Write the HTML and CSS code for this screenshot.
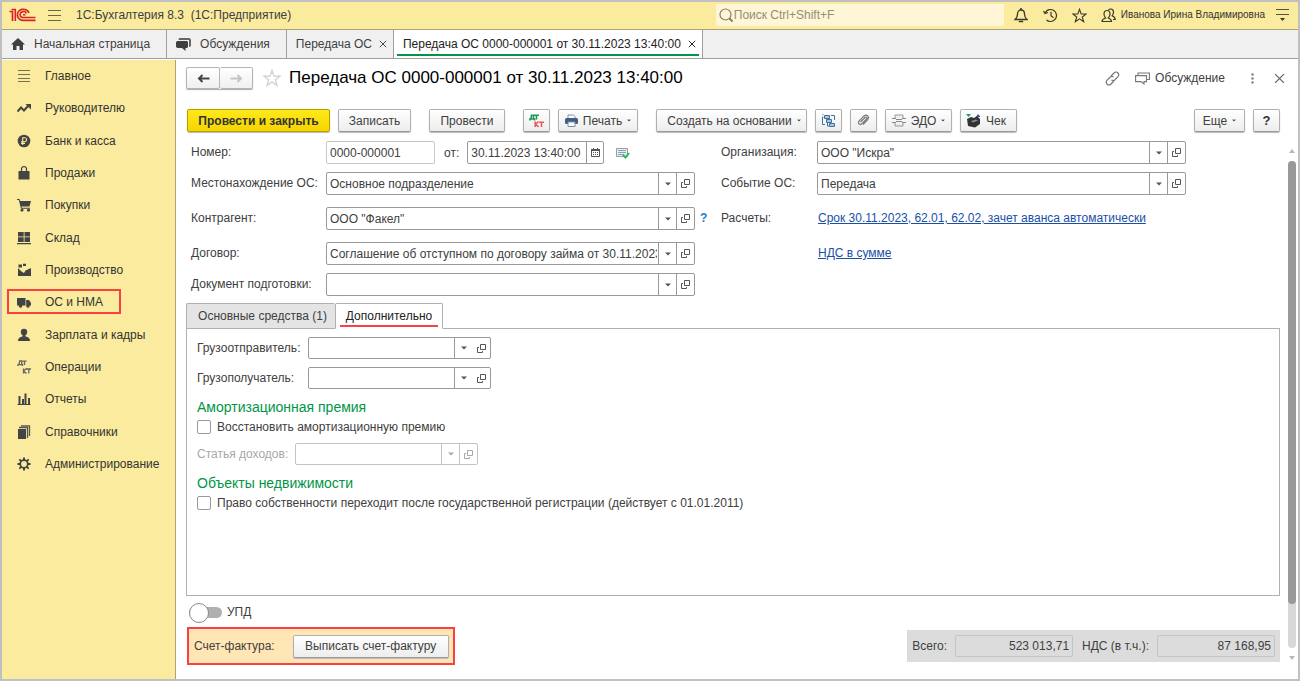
FILE: index.html
```html
<!DOCTYPE html>
<html lang="ru">
<head>
<meta charset="utf-8">
<title>1С:Бухгалтерия 8.3</title>
<link rel="stylesheet" href="styles.css">
</head>
<body>
<svg class="sprite" aria-hidden="true">
  <symbol id="i-down" viewBox="0 0 6 4"><path d="M0 .5h6L3 3.500z" fill="currentColor"/></symbol>
  <symbol id="i-open" viewBox="0 0 9 9"><path d="M3.500.5h5v5h-5zM2 3.500H.5v5h5V7" fill="none" stroke="currentColor"/></symbol>
  <symbol id="i-x" viewBox="0 0 10 10"><path d="M1 1l8 8M9 1L1 9" fill="none" stroke="currentColor" stroke-width="1.200"/></symbol>
  <symbol id="i-star" viewBox="0 0 18 18"><path d="M9 1.500l2 5.600 6 .1-4.700 3.600 1.700 5.700L9 13l-5 3.500 1.700-5.700L1 7.200l6-.1z" fill="none" stroke="currentColor" stroke-width="1.300"/></symbol>
</svg>
<div class="window">
  <header class="topbar">
    <svg class="logo" width="27" height="14" viewBox="0 0 27 14"><g fill="none" stroke="#d8232a"><path d="M.5 3.500h3V13" stroke-width="1.700"/><path d="M2.500 1.500h3.800V13" stroke-width="1.600"/><path d="M20 4.800A6 5.500 0 1 0 14.500 12.300H26.500" stroke-width="1.800"/><path d="M17.500 5.500A3.300 3 0 1 0 14.500 9.600H26.500" stroke-width="1.500"/><path d="M14 6.800h2.500" stroke-width="1.500"/></g></svg>
    <button class="plain burger" aria-label="Меню"><svg width="14" height="12" viewBox="0 0 14 12"><path d="M0 1.500h13M0 6.500h13M0 11.500h13" stroke="#6b6544" stroke-width="1"/></svg></button>
    <span class="app-name">1С:Бухгалтерия 8.3&nbsp; (1С:Предприятие)</span>
    <label class="search"><svg width="15" height="15" viewBox="0 0 15 15"><circle cx="6.500" cy="6.500" r="5.500" fill="none" stroke="#857f66" stroke-width="1.200"/><path d="M10.500 10.500l3 3" stroke="#857f66" stroke-width="2"/></svg><input type="text" aria-label="Поиск" placeholder="Поиск Ctrl+Shift+F"></label>
    <button class="plain tool" aria-label="Уведомления"><svg width="14" height="15" viewBox="0 0 14 15"><path d="M1 11.500c2-1.500 2.500-3 2.500-5.500C3.500 3.500 5 2 7 2s3.500 1.500 3.500 4c0 2.500.5 4 2.500 5.500z" fill="none" stroke="#3c3a2c" stroke-width="1.300"/><path d="M7 0v2M4.800 13.500h4.400" stroke="#3c3a2c" stroke-width="1.600"/></svg></button>
    <button class="plain tool" aria-label="История"><svg width="15" height="15" viewBox="0 0 15 15"><path d="M2.300 4.500A6 6 0 1 1 3.500 12M.5 3l1.500 2.500 3-1M8 3.800v4l2.500 2" fill="none" stroke="#3c3a2c" stroke-width="1.200"/></svg></button>
    <button class="plain tool" aria-label="Избранное"><svg width="15" height="15"><use href="#i-star"/></svg></button>
    <button class="plain tool people" aria-label="Пользователь"><svg width="15" height="15" viewBox="0 0 15 15"><path d="M1 13.500h9.500c0-2-.8-2.500-3.200-3.500 1.200-1.200 1.700-2.500 1.700-4C9 3.500 7.800 2.500 6 2.500S3 3.500 3 6c0 1.500.5 2.800 1.600 4C2 11 1 11.500 1 13.500zM7.500 2C8 1.200 9 1 9.800 1 11.500 1 12.500 2 12.500 4.200c0 1.500-.3 2.300-1.300 3.500 2.200 1 3 1.500 3 3.800H12" fill="none" stroke="#3c3a2c" stroke-width="1.200"/></svg></button>
    <span class="user">Иванова Ирина Владимировна</span>
    <button class="plain" aria-label="Настройки"><svg width="14" height="14" viewBox="0 0 14 14"><path d="M0 1.500h13M0 6.500h13" stroke="#57533c" stroke-width="1"/><path d="M4 10h5L6.500 13z" fill="#3c3a2c"/></svg></button>
  </header>

  <nav class="tabs">
    <a class="tab tab-home" href="#"><svg width="14" height="12" viewBox="0 0 14 12"><path d="M7 0l7 6.500h-2V12H8.500V8h-3v4H2V6.500H0z" fill="#404040"/></svg>Начальная страница</a>
    <a class="tab tab-talk" href="#"><svg width="15" height="13" viewBox="0 0 15 13"><path d="M3 0h10.500L15 1.500V8l-1.500 1H13V2H2.500z" fill="#666"/><path d="M1.500 3H11l1 1v5l-1 1H9.500v3L6 10H1.500L0 9V4z" fill="#404040"/></svg>Обсуждения</a>
    <a class="tab" href="#">Передача ОС<svg width="8" height="8"><use href="#i-x"/></svg></a>
    <a class="tab tab-active" href="#">Передача ОС 0000-000001 от 30.11.2023 13:40:00<svg width="8" height="8"><use href="#i-x"/></svg></a>
  </nav>

  <div class="workspace">
    <nav class="sidebar">
      <a href="#"><svg viewBox="0 0 14 14"><path d="M1 1.500h12M1 5.500h12M1 9.500h12M1 12.500h12" stroke="#77704f" stroke-width="1"/></svg>Главное</a>
      <a href="#"><svg viewBox="0 0 14 14"><path d="M.5 10.500l3.500-4 3 3 4.500-5" fill="none" stroke="#444" stroke-width="2"/><path d="M8.500 3H14v5.500z" fill="#444"/></svg>Руководителю</a>
      <a href="#"><svg viewBox="0 0 14 14"><circle cx="7" cy="7" r="6.300" fill="#444"/><path d="M5.700 11V3.800h2a1.800 1.800 0 0 1 0 3.900H4M4 9.400h4" fill="none" stroke="#fbeb9e" stroke-width="1.100"/></svg>Банк и касса</a>
      <a href="#"><svg viewBox="0 0 14 14"><path d="M1.500 5h11v8.500h-11z" fill="#444"/><path d="M4.500 7V2.500Q5 .7 7 .7t2.500 1.800V7" fill="none" stroke="#444" stroke-width="1.200"/></svg>Продажи</a>
      <a href="#"><svg viewBox="0 0 14 14"><path d="M0 1h2.500l.7 2H14l-1.500 5.500H4.500l.3 1.200H13v1H4L1.800 2H0z" fill="#444"/><path d="M4 11.500h2V13H4zM10.500 11.500h2V13h-2z" fill="#444" stroke="#444"/></svg>Покупки</a>
      <a href="#"><svg viewBox="0 0 14 14"><path d="M1 1h5.700v4.500H1zM7.500 1H13v4.500H7.500zM1 6.300h5.700V11H1zM7.500 6.300H13V11H7.500zM0 12h14v1.300H0z" fill="#444"/></svg>Склад</a>
      <a href="#"><svg viewBox="0 0 14 14"><path d="M1 13V5l3.500 3.500L7 10l1.500-2.500L14 5v8zM1.500 1.500H5V4.500H1.500zM6 .8h3V3H6z" fill="#444"/></svg>Производство</a>
      <a href="#" class="marked"><svg viewBox="0 0 14 14"><path d="M0 3h8.500v7.500H0zM9.200 5H12l2 3v2.500H9.200z" fill="#444"/><circle cx="3.500" cy="11" r="1.800" fill="#444"/><circle cx="11" cy="11" r="1.800" fill="#444"/></svg>ОС и НМА</a>
      <a href="#"><svg viewBox="0 0 14 14"><circle cx="7" cy="4" r="3.200" fill="#444"/><path d="M5.500 6h3v2.500q4.500.5 4.500 4.500H1q0-4 4.500-4.500z" fill="#444"/></svg>Зарплата и кадры</a>
      <a href="#"><svg viewBox="0 0 14 14"><g fill="none" stroke="#666" stroke-width="1.300"><path d="M1 6V4.700h4.500V6M2 4.500l.7-3.500h2v3.500M5.500 1.200H9.500M7.500 1v4M6.500 8.500V13.500M9.500 8.500l-3 2.500 3 2.500M9.500 9h4.500M11.800 9v4.500"/></g></svg>Операции</a>
      <a href="#"><svg viewBox="0 0 14 14"><path d="M1.500 4h2v8h-2zM5 7h2v5H5zM7.500 1.500h2V12h-2zM11 6h2v6h-2zM.5 12h13v1H.5z" fill="#444"/></svg>Отчеты</a>
      <a href="#"><svg viewBox="0 0 14 14"><path d="M1 4h8v10H1z" fill="#444"/><path d="M2 2.500H10.500V13M4 .8h8.500V11" fill="none" stroke="#555" stroke-width="1.300"/></svg>Справочники</a>
      <a href="#"><svg viewBox="0 0 14 14"><circle cx="7" cy="7" r="3.800" fill="none" stroke="#444" stroke-width="1.800"/><path d="M7 .5V3M7 11v2.500M.5 7H3M11 7h2.500M2.400 2.400l1.700 1.700M9.900 9.900l1.700 1.700M2.400 11.600l1.700-1.700M9.900 4.100l1.700-1.700" stroke="#444" stroke-width="2"/></svg>Администрирование</a>
    </nav>

    <main class="content">
      <div class="title-row">
        <div class="history">
          <button aria-label="Назад"><svg width="13" height="9" viewBox="0 0 13 9"><path d="M12.500 4.500H3M5.500 1L2 4.500 5.500 8" fill="none" stroke="#444" stroke-width="2"/></svg></button><button aria-label="Вперед"><svg width="13" height="9" viewBox="0 0 13 9"><path d="M.5 4.500H10M7.500 1L11 4.500 7.500 8" fill="none" stroke="#c4c4c4" stroke-width="2"/></svg></button>
        </div>
        <button class="plain fav" aria-label="В избранное"><svg width="18" height="18"><use href="#i-star"/></svg></button>
        <h1>Передача ОС 0000-000001 от 30.11.2023 13:40:00</h1>
        <button class="plain link-btn" aria-label="Ссылка"><svg width="15" height="15" viewBox="0 0 15 15"><g fill="none" stroke="#777" stroke-width="1.200"><path d="M6 5l3-3c1.500-1.500 3-1.200 4 0s1 2.500 0 3.700l-3 3c-1.200 1-2.500 1-3.500.3"/><path d="M9 10l-3 3c-1.500 1.500-3 1.200-4 0s-1-2.500 0-3.700l3-3c1.200-1 2.500-1 3.500-.3"/></g></svg></button>
        <button class="plain talk-btn"><svg width="15" height="13" viewBox="0 0 15 13"><path d="M.6 3.600H11.500v6H9V12L6 9.600H.6zM3 3.500V1h11.400v6.500h-2.500" fill="none" stroke="#777" stroke-width="1.100"/></svg>Обсуждение</button>
        <button class="plain dots" aria-label="Еще действия"><svg width="3" height="11" viewBox="0 0 3 11"><path d="M.5.500h2v2h-2zM.5 4.500h2v2h-2zM.5 8.500h2v2h-2z" fill="#666"/></svg></button>
        <button class="plain close" aria-label="Закрыть"><svg width="11" height="11"><use href="#i-x"/></svg></button>
      </div>

      <div class="toolbar">
        <button class="btn primary">Провести и закрыть</button>
        <button class="btn w-save gap">Записать</button>
        <button class="btn w-post gap">Провести</button>
        <button class="btn w-icon" aria-label="Дт Кт"><svg width="16" height="14" viewBox="0 0 16 14"><g fill="none" stroke-width="1.600"><path d="M.9 6.500V5h4.600v1.500M1.900 5l.6-3.800h2V5M5 1.300h5M7.500 1.300v4.200" stroke="#1c9a54"/><path d="M6.200 7.500V13M9.500 7.500l-3 2.700 3 2.800M10 8.300h5M12.500 8.200V13" stroke="#ea5a5a"/></g></svg></button>
        <button class="btn w-print gap"><svg width="13" height="13" viewBox="0 0 13 13"><path d="M3 4V1h5.500L10 2.500V4" fill="#fff" stroke="#7890a4"/><rect y="4" width="13" height="6" rx="1.500" fill="#3d6184"/><path d="M3 8h7v4.500H3z" fill="#fff" stroke="#7890a4"/></svg>Печать<svg class="caret" width="4" height="3" viewBox="0 0 6 4"><use href="#i-down"/></svg></button>
        <button class="btn w-create">Создать на основании<svg class="caret" width="4" height="3" viewBox="0 0 6 4"><use href="#i-down"/></svg></button>
        <button class="btn w-icon" aria-label="Структура"><svg width="13" height="13" viewBox="0 0 13 13"><g fill="#a9c8df" stroke="#427099"><path d="M2.500 1.500h5v3h-5zM4.500 5.500h5v3h-5zM7.500 9.500h5v3h-5z"/></g><path d="M1.500 3H.5v7.500H3M.5.500h1M9 1.500h3.500V6M5.500 9v3H7" fill="none" stroke="#427099"/></svg></button>
        <button class="btn w-icon" aria-label="Файлы"><svg width="13" height="13" viewBox="0 0 13 13"><path d="M3.500 8L8 3.500c1.200-1.200 2.700.3 1.500 1.500L5 9.700c-2 2-4.800-.6-2.800-2.800l4.500-4.700c3-2.700 6.500.6 3.800 3.600L6 10.500" fill="none" stroke="#777" stroke-width="1.200"/></svg></button>
        <button class="btn w-edo"><svg width="14" height="13" viewBox="0 0 14 13"><path d="M3 4V1h8v3M3 9v3h8V9" fill="#eee" stroke="#999"/><path d="M0 4.500h4M10 4.500h4M0 8.500h4M10 8.500h4M4 5.500h6M4 7.500h6" stroke="#888" stroke-width="1"/></svg>ЭДО<svg class="caret" width="4" height="3" viewBox="0 0 6 4"><use href="#i-down"/></svg></button>
        <button class="btn w-check"><svg width="15" height="14" viewBox="0 0 15 14"><path d="M1 5l4-2 3 1 3-2 3 3v5l-5 3.500-7-1.500z" fill="#333"/><path d="M5 7l5-1.500 2 1-5 2z" fill="#888"/><path d="M0 0h5L2.500 3z" fill="#15a552"/><path d="M10 3h4.500L12 0z" fill="#3949b5"/></svg>Чек</button>
        <span class="spacer"></span>
        <button class="btn w-more">Еще<svg class="caret" width="4" height="3" viewBox="0 0 6 4"><use href="#i-down"/></svg></button>
        <button class="btn w-icon help">?</button>
      </div>

      <div class="scroll-area">
        <div class="document">
          <div class="form">
            <label for="num">Номер:</label>
            <div class="number-line">
              <input id="num" class="box" type="text" value="0000-000001">
              <label for="date">от:</label>
              <div class="combo date"><input id="date" type="text" value="30.11.2023 13:40:00"><button aria-label="Календарь"><svg width="9" height="9" viewBox="0 0 9 9"><path d="M.5 1.500h8v7h-8z" fill="none" stroke="#555"/><path d="M0 1h9v2H0zM2 0h1v2H2zM6 0h1v2H6zM2 4h1v1H2zM4 4h1v1H4zM6 4h1v1H6zM2 6h1v1H2zM4 6h1v1H4zM6 6h1v1H6z" fill="#555"/></svg></button></div>
              <svg width="14" height="12" viewBox="0 0 14 12"><path d="M.5 1.500h11v8H.5z" fill="#e8eef2" stroke="#90a0ac"/><path d="M2 3.500h8M2 5.500h8M2 7.500h6" stroke="#90a0ac"/><path d="M7 8l2.500 2.500L13 6" fill="none" stroke="#2db84b" stroke-width="2"/></svg>
            </div>
            <span></span>
            <label for="org">Организация:</label>
            <div class="combo"><input id="org" type="text" value="ООО &quot;Искра&quot;"><button aria-label="Выбрать"><svg width="6" height="4"><use href="#i-down"/></svg></button><button aria-label="Открыть"><svg width="9" height="9"><use href="#i-open"/></svg></button></div>

            <label for="place">Местонахождение ОС:</label>
            <div class="combo"><input id="place" type="text" value="Основное подразделение"><button aria-label="Выбрать"><svg width="6" height="4"><use href="#i-down"/></svg></button><button aria-label="Открыть"><svg width="9" height="9"><use href="#i-open"/></svg></button></div>
            <span></span>
            <label for="event">Событие ОС:</label>
            <div class="combo"><input id="event" type="text" value="Передача"><button aria-label="Выбрать"><svg width="6" height="4"><use href="#i-down"/></svg></button><button aria-label="Открыть"><svg width="9" height="9"><use href="#i-open"/></svg></button></div>

            <label for="party">Контрагент:</label>
            <div class="combo"><input id="party" type="text" value="ООО &quot;Факел&quot;"><button aria-label="Выбрать"><svg width="6" height="4"><use href="#i-down"/></svg></button><button aria-label="Открыть"><svg width="9" height="9"><use href="#i-open"/></svg></button></div>
            <button class="plain hint">?</button>
            <span class="caption">Расчеты:</span>
            <a class="link" href="#">Срок 30.11.2023, 62.01, 62.02, зачет аванса автоматически</a>

            <label for="deal">Договор:</label>
            <div class="combo"><input id="deal" type="text" value="Соглашение об отступном по договору займа от 30.11.2023"><button aria-label="Выбрать"><svg width="6" height="4"><use href="#i-down"/></svg></button><button aria-label="Открыть"><svg width="9" height="9"><use href="#i-open"/></svg></button></div>
            <span></span>
            <span></span>
            <a class="link" href="#">НДС в сумме</a>

            <label for="prep">Документ подготовки:</label>
            <div class="combo"><input id="prep" type="text"><button aria-label="Выбрать"><svg width="6" height="4"><use href="#i-down"/></svg></button><button aria-label="Открыть"><svg width="9" height="9"><use href="#i-open"/></svg></button></div>
          </div>

          <div class="page-tabs">
            <button class="page-tab first">Основные средства (1)</button><button class="page-tab current"><span>Дополнительно</span></button>
          </div>
          <section class="panel">
            <div class="line">
              <label for="sender" class="cap">Грузоотправитель:</label>
              <div class="combo short joined"><input id="sender" type="text"><button aria-label="Выбрать"><svg width="6" height="4"><use href="#i-down"/></svg></button><button aria-label="Открыть"><svg width="9" height="9"><use href="#i-open"/></svg></button></div>
            </div>
            <div class="line">
              <label for="receiver" class="cap">Грузополучатель:</label>
              <div class="combo short joined"><input id="receiver" type="text"><button aria-label="Выбрать"><svg width="6" height="4"><use href="#i-down"/></svg></button><button aria-label="Открыть"><svg width="9" height="9"><use href="#i-open"/></svg></button></div>
            </div>
            <h2>Амортизационная премия</h2>
            <label class="check"><input type="checkbox">Восстановить амортизационную премию</label>
            <div class="line off">
              <label for="income" class="cap">Статья доходов:</label>
              <div class="combo short"><input id="income" type="text" disabled><button disabled aria-label="Выбрать"><svg width="6" height="4"><use href="#i-down"/></svg></button><button disabled aria-label="Открыть"><svg width="9" height="9"><use href="#i-open"/></svg></button></div>
            </div>
            <h2>Объекты недвижимости</h2>
            <label class="check"><input type="checkbox">Право собственности переходит после государственной регистрации (действует с 01.01.2011)</label>
          </section>

          <label class="switch"><input type="checkbox" role="switch">УПД</label>

          <div class="bottom">
            <div class="invoice">
              <span>Счет-фактура:</span>
              <button class="btn">Выписать счет-фактуру</button>
            </div>
            <div class="totals">
              <label for="total">Всего:</label><input id="total" type="text" value="523 013,71" readonly>
              <label for="vat">НДС (в т.ч.):</label><input id="vat" type="text" value="87 168,95" readonly>
            </div>
          </div>
        </div>
        <div class="scrollbar" aria-hidden="true">
          <svg width="6" height="4" viewBox="0 0 6 4"><path d="M3 0l3 4H0z" fill="#b8b8b8"/></svg>
          <div class="track"><div class="thumb"></div></div>
          <svg width="6" height="4" viewBox="0 0 6 4"><path d="M3 4l3-4H0z" fill="#b8b8b8"/></svg>
        </div>
      </div>
    </main>
  </div>
</div>
</body>
</html>
```
FILE: styles.css
```css
* { box-sizing: border-box; }

body {
  margin: 0;
  font: 12px/16px "Liberation Sans", Arial, sans-serif;
  color: #404040;
  background: #fff;
}

button, input { font: inherit; color: inherit; margin: 0; }
button { cursor: pointer; }
svg { flex: none; display: block; }
input { min-width: 0; outline: none; }

.sprite { display: none; }

.plain {
  display: flex;
  align-items: center;
  padding: 0;
  border: 0;
  background: none;
}

.window {
  display: flex;
  flex-direction: column;
  min-height: 100vh;
  border: 2px solid #c0c0c0;
}

/* Top bar */
.topbar {
  display: flex;
  align-items: center;
  height: 28px;
  padding: 0 8px 1px 7px;
  background: #fbeb9e;
  border-bottom: 1px solid #a9a27a;
}
.burger { margin: 0 14px 0 12px; }
.app-name { flex: 1; white-space: nowrap; }
.search {
  display: flex;
  align-items: center;
  width: 288px;
  height: 22px;
  margin-right: 10px;
  padding-left: 3px;
  border-radius: 2px;
  background: #fef6d6;
}
.search input {
  flex: 1;
  padding: 0;
  border: 0;
  background: none;
}
.search input::placeholder { color: #948e76; opacity: 1; }
.tool { width: 15px; margin-right: 14px; justify-content: center; color: #3c3a2c; }
.people { margin-right: 5px; }
.user { margin-right: 11px; font-size: 10px; color: #333; white-space: nowrap; }

/* Window tabs */
.tabs {
  display: flex;
  height: 29px;
  background: #f0f0f0;
  border-bottom: 1px solid #a0a0a0;
}
.tab {
  display: flex;
  align-items: center;
  gap: 7px;
  padding: 0 6px 0 9px;
  border-right: 1px solid #a0a0a0;
  color: #404040;
  text-decoration: none;
  white-space: nowrap;
}
.tab-home { gap: 9px; padding-right: 16px; }
.tab-talk { gap: 9px; padding-right: 16px; }
.tab-active { background: #fff; color: #222; position: relative; }
.tab-active::after {
  content: "";
  position: absolute;
  left: 3px;
  right: 3px;
  bottom: 2px;
  height: 2px;
  background: #009646;
}

/* Sidebar */
.workspace { display: flex; flex: 1; padding-top: 1px; }
.sidebar {
  flex: none;
  width: 174px;
  background: #fbeb9e;
  border-right: 1px solid #a9a27a;
  display: grid;
  grid-template-rows: repeat(13, minmax(0, 1fr));
  padding-bottom: 199px;
}
.sidebar a {
  position: relative;
  display: flex;
  align-items: center;
  gap: 14px;
  padding-left: 15px;
  color: #333;
  text-decoration: none;
}
.sidebar svg { width: 14px; height: 14px; }
.marked::after {
  content: "";
  position: absolute;
  left: 5px;
  right: 54px;
  top: 3px;
  bottom: 4px;
  border: 2px solid #fa4040;
}

/* Content */
.content {
  flex: 1;
  min-width: 0;
  display: flex;
  flex-direction: column;
}
.title-row {
  display: flex;
  align-items: center;
  height: 36px;
  padding: 0 13px 0 10px;
}
.history { display: flex; box-shadow: 0 1px 1px #aaa; border-radius: 2px; }
.history button {
  display: flex;
  align-items: center;
  justify-content: center;
  width: 34px;
  height: 22px;
  padding: 0;
  border: 1px solid #b4b4b4;
  border-radius: 2px;
  background: linear-gradient(#fff, #f0f0f0);
}
.history button + button { width: 33px; border-left: 0; }
.fav { margin: 0 8px 0 10px; color: #d0d0d0; }
h1 {
  flex: 1;
  margin: 0;
  font-size: 17px;
  line-height: 22px;
  font-weight: normal;
  color: #000;
  white-space: nowrap;
}
.link-btn { margin-right: 15px; }
.talk-btn { gap: 5px; margin-right: 26px; }
.dots { margin-right: 20px; }
.close { color: #666; }

.toolbar {
  display: flex;
  gap: 8px;
  height: 45px;
  padding: 13px 18px 0 11px;
}
.btn {
  display: flex;
  align-items: center;
  justify-content: center;
  gap: 5px;
  height: 23px;
  padding: 0 9px;
  border: 1px solid #b0b0b0;
  border-bottom-color: #999;
  border-radius: 2px;
  background: linear-gradient(#fff, #ededed);
  box-shadow: 0 1px 1px #bbb;
  white-space: nowrap;
}
.primary {
  width: 143px;
  padding: 0;
  font-weight: bold;
  color: #333;
  border-color: #b5a000;
  background: linear-gradient(#ffe81a, #f6d500);
}
.w-save { width: 73px; }
.w-post { width: 76px; }
.gap { margin-right: 10px; }
.w-icon { width: 27px; padding: 0; }
.w-print { width: 80px; }
.w-create { width: 151px; padding: 0 4px 0 9px; }
.w-edo { width: 67px; }
.w-check { width: 57px; padding: 0 5px; justify-content: flex-start; }
.w-more { width: 51px; }
.help { font-weight: bold; font-size: 13px; color: #333; }
.spacer { flex: 1; }

.scroll-area { flex: 1; display: flex; }
.document {
  flex: 1;
  min-width: 0;
  display: flex;
  flex-direction: column;
  padding: 0 0 14px 10px;
}

/* Document header fields */
.form {
  display: grid;
  grid-template-columns: 135px minmax(0, 1fr) 26px 96px minmax(0, 1fr);
  grid-template-rows: 31px 35px 35px 31px 30px;
  align-items: start;
  padding: 0 100px 0 5px;
}
.form label, .caption, .link { line-height: 22px; white-space: nowrap; }
.link { color: #1a4fa8; margin-left: 1px; justify-self: start; text-decoration: underline; }
.hint { margin-left: 5px; height: 22px; font-weight: bold; color: #1c7cc4; }
.number-line { display: flex; align-items: center; }
.number-line label { margin: 0 8px 0 9px; }
.number-line > svg { margin-left: 12px; }
.box {
  width: 109px;
  height: 23px;
  padding: 0 3px;
  border: 1px solid #c8c8c8;
  border-radius: 2px;
  background: #fff;
}
.combo {
  display: flex;
  height: 23px;
  border: 1px solid #999;
  border-radius: 2px;
  background: #fff;
}
.combo input {
  flex: 1;
  width: 0;
  margin-right: 1px;
  padding: 0 0 0 3px;
  border: 0;
  background: none;
}
.combo button {
  display: flex;
  align-items: center;
  justify-content: center;
  width: 18px;
  padding: 0;
  border: 0;
  border-left: 1px solid #999;
  background: none;
  color: #555;
}
.date { width: 137px; }
.date button { width: 17px; }

/* Page tabs and panel */
.page-tabs { display: flex; position: relative; margin-bottom: -1px; }
.page-tab {
  height: 26px;
  padding: 0 7px 0 10px;
  border: 1px solid #b0b0b0;
  border-radius: 2px 2px 0 0;
  background: #e4e4e4;
  white-space: nowrap;
}
.first { width: 149px; border-right: 0; }
.current {
  width: 108px;
  padding: 0 4px;
  color: #222;
  background: #fff;
  border-bottom-color: #fff;
}
.current span {
  display: block;
  margin-top: 1px;
  line-height: 18px;
  border-bottom: 2px solid #fa4040;
}
.panel {
  flex: 1;
  padding: 8px 10px;
  border: 1px solid #b0b0b0;
}
.panel, .page-tabs { margin-right: 6px; }
.line { display: flex; align-items: center; margin-bottom: 8px; }
.cap { width: 111px; white-space: nowrap; }
.short { width: 183px; height: 22px; }
.joined button + button { border-left: 0; }
.off { color: #a8a8a8; margin: 6px 0 8px; }
.off .cap { width: 98px; }
.off .combo, .off button { border-color: #c4c4c4; color: #a8a8a8; }
h2 {
  margin: 0;
  font-size: 14px;
  line-height: 20px;
  font-weight: normal;
  color: #009646;
}
.check { display: flex; align-items: center; gap: 6px; line-height: 20px; }
.check input {
  appearance: none;
  width: 14px;
  height: 14px;
  border: 1px solid #999;
  border-radius: 2px;
  background: #fff;
}

/* Footer */
.switch {
  display: flex;
  align-items: center;
  gap: 5px;
  margin: 7px 0 6px 3px;
  line-height: 18px;
}
.switch input {
  position: relative;
  appearance: none;
  width: 33px;
  height: 11px;
  border-radius: 6px;
  background: #b0b0b0;
}
.switch input::before {
  content: "";
  position: absolute;
  left: 0;
  top: -4px;
  width: 18px;
  height: 18px;
  border: 1px solid #888;
  border-radius: 50%;
  background: #fff;
}
.bottom {
  display: flex;
  align-items: center;
  justify-content: space-between;
  padding: 0 6px 0 1px;
}
.invoice {
  display: flex;
  align-items: center;
  gap: 18px;
  height: 38px;
  padding: 0 4px 0 5px;
  border: 2px solid #fa4040;
  background: #ffe6b4;
}
.invoice .btn { width: 156px; padding: 0; }
.totals {
  display: flex;
  align-items: center;
  height: 32px;
  padding: 0 5px;
  background: #dcdcdc;
}
.totals input {
  width: 118px;
  height: 22px;
  margin: 0 9px 0 8px;
  padding: 0 3px;
  text-align: right;
  border: 1px solid #c4c4c4;
  border-radius: 2px;
  background: none;
}
.totals input:last-child { margin-right: 0; }

/* Scrollbar */
.scrollbar {
  flex: none;
  width: 12px;
  display: flex;
  flex-direction: column;
  align-items: center;
  gap: 8px;
  padding: 8px 0 19px;
}
.track {
  flex: 1;
  width: 8px;
  border-radius: 4px;
  background: #d8d8d8;
}
.thumb { height: 91%; border-radius: 4px; background: #999; }
```
